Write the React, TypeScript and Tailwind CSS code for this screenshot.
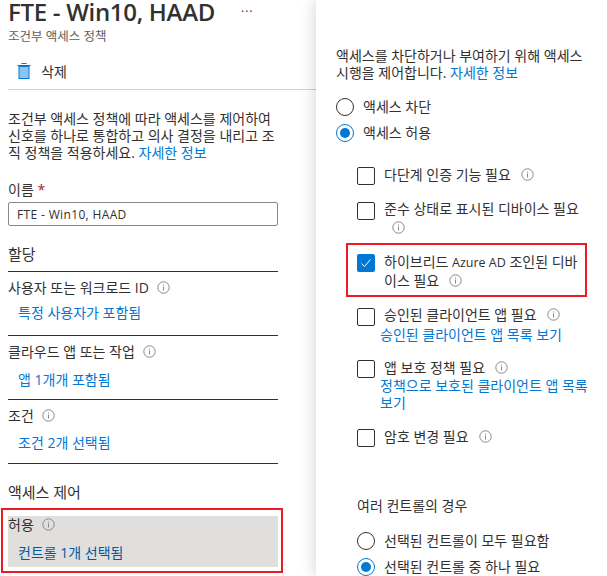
import React from "react";

const font = { fontFamily: '"Open Sans","Noto Sans CJK KR",sans-serif' };

function Info({ className = "" }: { className?: string }) {
  return (
    <svg width="13" height="13" viewBox="0 0 13 13" className={"shrink-0 " + className}>
      <circle cx="6.5" cy="6.5" r="5.7" fill="none" stroke="#8a8886" strokeWidth="1" />
      <rect x="6" y="5.5" width="1" height="4" fill="#8a8886" />
      <rect x="6" y="3.5" width="1" height="1" fill="#8a8886" />
    </svg>
  );
}

function Radio({ on }: { on?: boolean }) {
  return on ? (
    <span className="w-[18px] h-[18px] rounded-full border border-[#0078d4] flex items-center justify-center shrink-0">
      <span className="w-[10px] h-[10px] rounded-full bg-[#0078d4]" />
    </span>
  ) : (
    <span className="w-[18px] h-[18px] rounded-full border border-[#323130] shrink-0" />
  );
}

function Box({ on }: { on?: boolean }) {
  return on ? (
    <span className="w-[18px] h-[18px] rounded-[2px] bg-[#0078d4] flex items-center justify-center shrink-0">
      <svg width="12" height="12" viewBox="0 0 12 12" fill="none" stroke="#fff" strokeWidth="1">
        <path d="M1.5 6.5 4.5 9.5 10.5 2.5" />
      </svg>
    </span>
  ) : (
    <span className="w-[18px] h-[18px] rounded-[2px] border border-[#323130] shrink-0" />
  );
}

function Assign({ label, value, mt }: { label: string; value: string; mt: string }) {
  return (
    <div className="border-b border-[#323130] h-[64px] pt-[7px]">
      <div className="flex items-center gap-[8px] h-[17px]">
        <span>{label}</span>
        <Info />
      </div>
      <div className={"pl-[10px] text-[#0078d4] " + mt}>{value}</div>
    </div>
  );
}

export default function App() {
  return (
    <div className="relative flex w-[607px] h-[576px] overflow-hidden bg-white text-[14px] leading-[17px] text-[#323130]" style={font}>
      <div className="w-[316px] shrink-0 h-full pl-[8px] overflow-hidden">
        <div className="flex items-start h-[26px]">
          <h1 className="text-[24px] leading-[26px] font-semibold tracking-[-0.3px] whitespace-nowrap -mt-[1px]">FTE - Win10, HAAD</h1>
          <span className="ml-[26px] mt-[1px] text-[12px] leading-[22px] tracking-[1px]">···</span>
        </div>
        <div className="text-[12.5px] leading-[16px] text-[#605e5c] mt-[3px]">조건부 액세스 정책</div>
        <div className="flex items-center h-[26px] mt-[13px] pl-[9px] gap-[10px]">
          <svg width="14" height="16" viewBox="0 0 14 16">
            <rect x="2" y="3.5" width="10" height="12" fill="#8ec4f0" stroke="#0078d4" strokeWidth="1" />
            <path d="M0.5 2.5h13M4.5 .5h5" stroke="#0078d4" strokeWidth="1" />
          </svg>
          <span>삭제</span>
        </div>
        <div className="border-b border-[#d2d0ce] mt-[5px]" />
        <div className="w-[270px] mt-[20px]">
          <p className="whitespace-nowrap">조건부 액세스 정책에 따라 액세스를 제어하여<br />신호를 하나로 통합하고 의사 결정을 내리고 조<br />직 정책을 적용하세요. <span className="text-[#0078d4]">자세한 정보</span></p>
          <div className="mt-[20px]">이름 <span className="text-[#a4262c]">*</span></div>
          <div className="h-[24px] mt-[4px] border border-[#8a8886] rounded-[2px] pl-[8px] flex items-center text-[12px] tracking-[0.35px]">FTE - Win10, HAAD</div>
          <div className="border-b border-[#323130] mt-[20px] h-[26px] text-[15px]">할당</div>
          <Assign label="사용자 또는 워크로드 ID" value="특정 사용자가 포함됨" mt="mt-[8px]" />
          <Assign label="클라우드 앱 또는 작업" value="앱 1개개 포함됨" mt="mt-[11px]" />
          <Assign label="조건" value="조건 2개 선택됨" mt="mt-[10px]" />
          <div className="border-b border-[#323130] mt-[20px] h-[26px] text-[15px]">액세스 제어</div>
          <div className="bg-[#e1dfdd] h-[51px] mt-[6px]">
            <div className="flex items-center gap-[8px] h-[17px]"><span>허용</span><Info /></div>
            <div className="pl-[10px] text-[#005a9e] mt-[11px]">컨트롤 1개 선택됨</div>
          </div>
        </div>
      </div>
      <div className="relative flex-1 bg-white pl-[20px] pt-[47px] whitespace-nowrap overflow-hidden shadow-[-2px_0_14px_rgba(0,0,0,0.15)]">
        <p>액세스를 차단하거나 부여하기 위해 액세스<br />시행을 제어합니다. <span className="text-[#0078d4]">자세한 정보</span></p>
        <div className="flex items-center gap-[9px] mt-[13px] h-[26px]"><Radio /><span className="-mt-[2px]">액세스 차단</span></div>
        <div className="flex items-center gap-[9px] h-[26px]"><Radio on /><span className="-mt-[2px]">액세스 허용</span></div>
        <div className="pl-[21px] mt-[21px]">
          <div className="flex gap-[9px]"><Box /><div className="flex items-center gap-[10px] h-[17px] -mt-[1px]"><span>다단계 인증 기능 필요</span><Info /></div></div>
          <div className="flex gap-[9px] mt-[17px]"><Box /><div className="-mt-[2px]"><div>준수 상태로 표시된 디바이스 필요</div><div className="h-[17px] flex items-center pl-[8px] mt-[2px]"><Info /></div></div></div>
          <div className="flex gap-[9px] mt-[18px]"><Box on /><div className="-mt-[1px]"><div>하이브리드 <span className="text-[12.5px]">Azure AD</span> 조인된 디바</div><div className="flex items-center gap-[10px] mt-[1px]"><span>이스 필요</span><Info /></div></div></div>
          <div className="flex gap-[9px] mt-[19px]"><Box /><div className="-mt-[2px]"><div className="flex items-center gap-[10px]"><span>승인된 클라이언트 앱 필요</span><Info /></div><div className="text-[#0078d4] -ml-[4px] mt-[3px]">승인된 클라이언트 앱 목록 보기</div></div></div>
          <div className="flex gap-[9px] mt-[17px]"><Box /><div className="-mt-[1px]"><div className="flex items-center gap-[10px]"><span>앱 보호 정책 필요</span><Info /></div><div className="text-[#0078d4] -ml-[4px] mt-[1px]">정책으로 보호된 클라이언트 앱 목록<br />보기</div></div></div>
          <div className="flex gap-[9px] mt-[18px]"><Box /><div className="flex items-center gap-[10px] h-[17px] -mt-[1px]"><span>암호 변경 필요</span><Info /></div></div>
        </div>
        <div className="pl-[21px] mt-[50px]">여러 컨트롤의 경우</div>
        <div className="pl-[21px] mt-[14px]">
          <div className="flex items-center gap-[9px] h-[26px]"><Radio /><span className="-mt-[2px]">선택된 컨트롤이 모두 필요함</span></div>
          <div className="flex items-center gap-[9px] h-[26px]"><Radio on /><span className="-mt-[2px]">선택된 컨트롤 중 하나 필요</span></div>
        </div>
      </div>
      <div className="absolute left-[1px] top-[508px] w-[282px] h-[65px] border-[2px] border-[#ed1c24]" />
      <div className="absolute left-[346px] top-[243px] w-[241px] h-[54px] border-[2px] border-[#ed1c24]" />
    </div>
  );
}
